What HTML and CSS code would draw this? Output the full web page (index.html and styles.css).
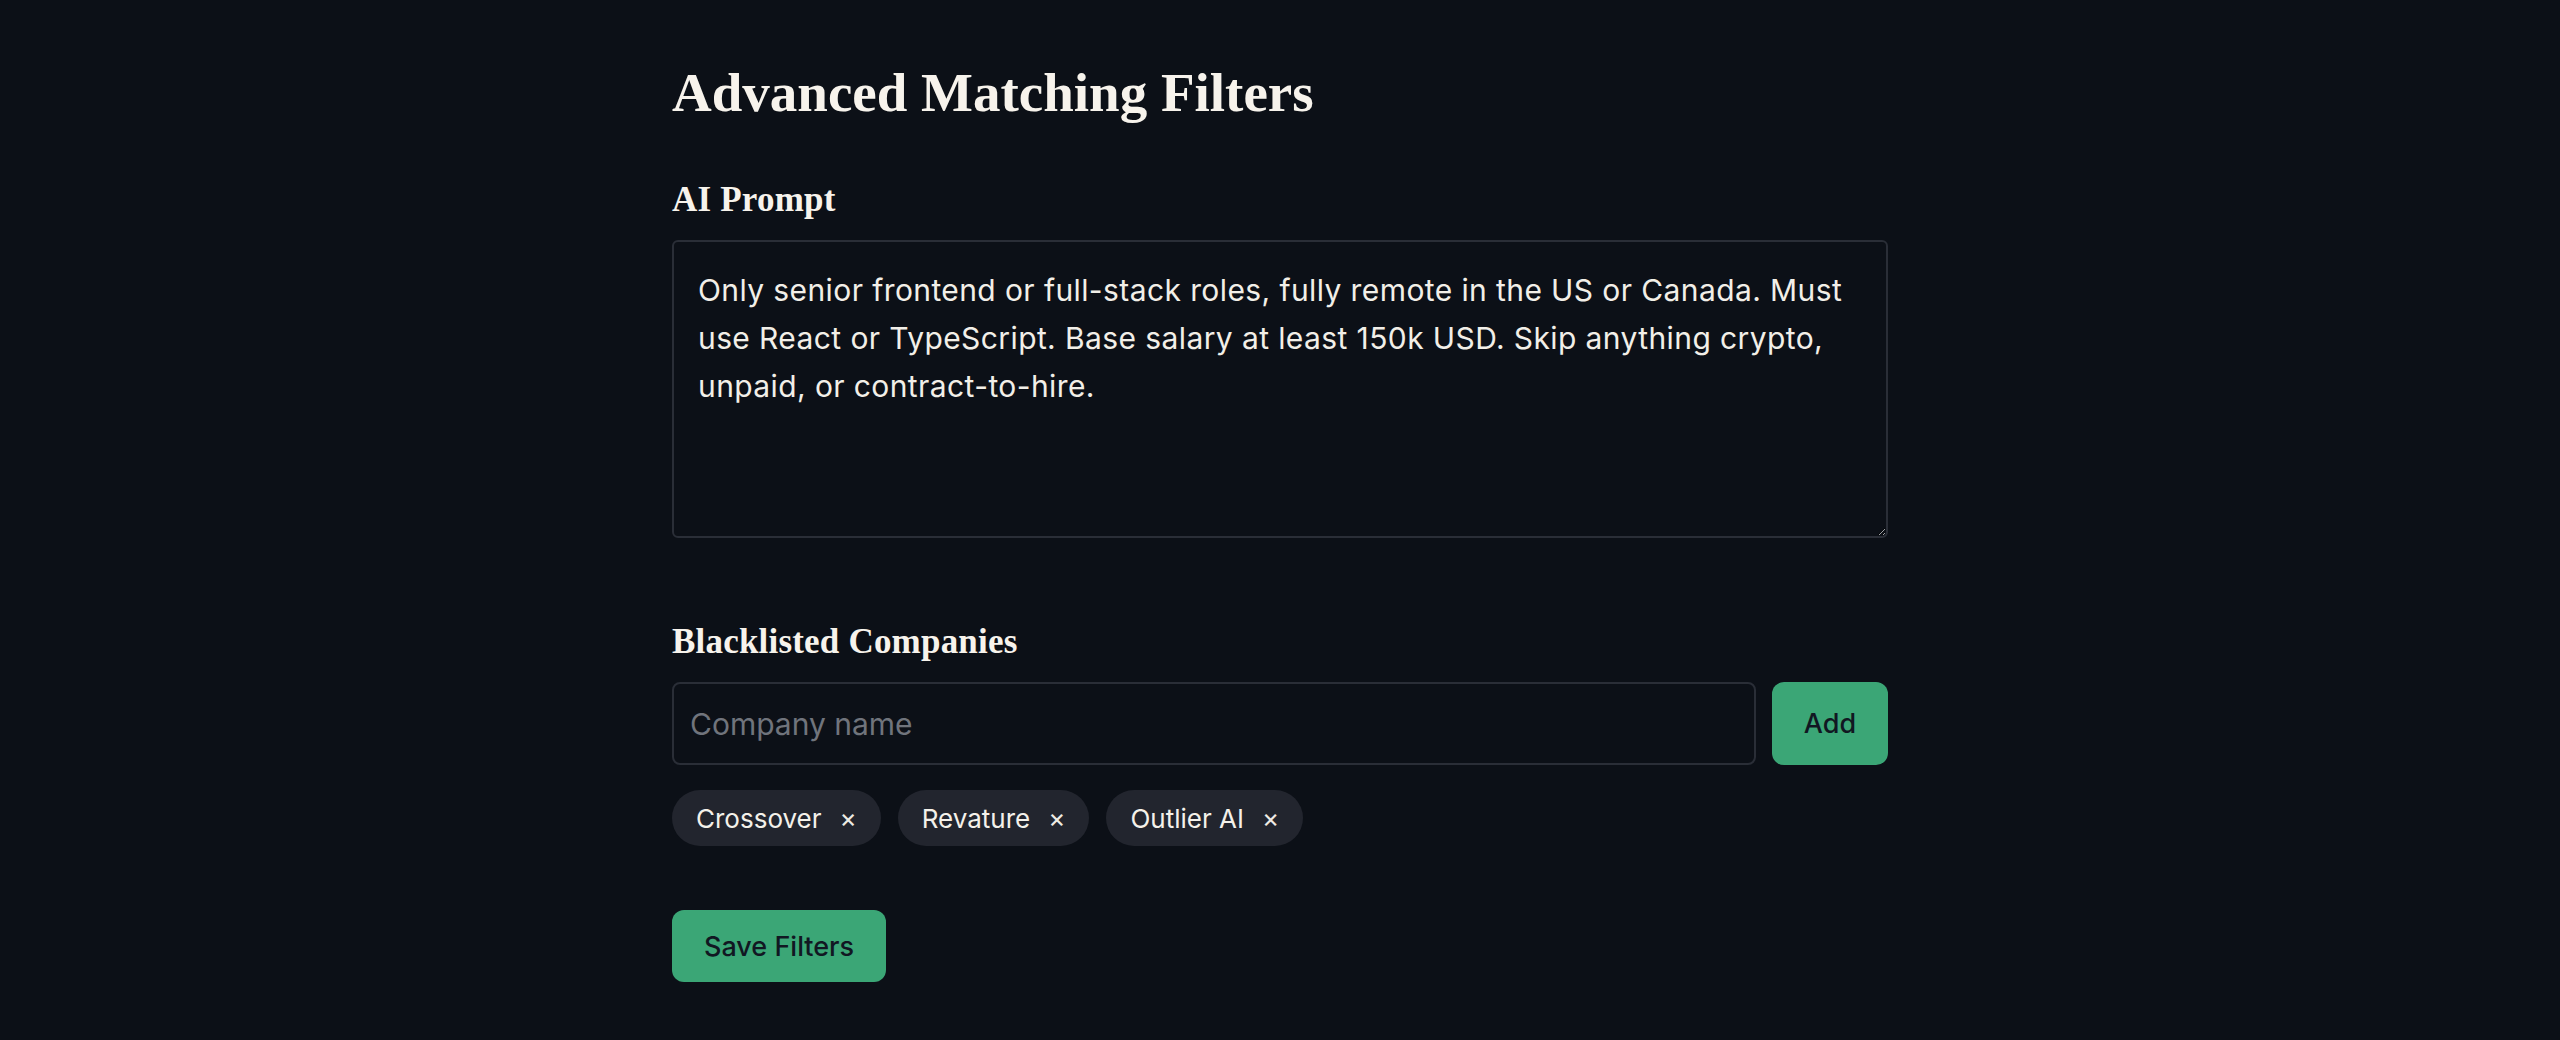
FILE: index.html
```html
<!DOCTYPE html>
<html lang="en">
<head>
<meta charset="utf-8">
<title>Advanced Matching Filters</title>
<link rel="stylesheet" href="styles.css">
</head>
<body>
<main class="page">
  <h1 class="title">Advanced Matching Filters</h1>

  <section class="field field-prompt">
    <label class="label" for="prompt">AI Prompt</label>
    <textarea id="prompt" class="prompt">Only senior frontend or full-stack roles, fully remote in the US or Canada. Must use React or TypeScript. Base salary at least 150k USD. Skip anything crypto, unpaid, or contract-to-hire.</textarea>
  </section>

  <section class="field field-blacklist">
    <label class="label" for="company">Blacklisted Companies</label>
    <div class="add-row">
      <input id="company" class="company-input" type="text" placeholder="Company name">
      <button class="btn btn-add" type="button">Add</button>
    </div>
    <ul class="chips">
      <li class="chip"><span class="chip-text">Crossover</span><button class="chip-x" type="button">×</button></li>
      <li class="chip"><span class="chip-text">Revature</span><button class="chip-x" type="button">×</button></li>
      <li class="chip"><span class="chip-text">Outlier AI</span><button class="chip-x" type="button">×</button></li>
    </ul>
  </section>

  <div class="actions">
    <button class="btn btn-save" type="button">Save Filters</button>
  </div>
</main>
</body>
</html>
```
FILE: styles.css
```css
* { box-sizing: border-box; }

html, body {
  margin: 0;
  background: #0c1017;
  color: #f4f1ea;
  color-scheme: dark;
}

body {
  font-family: Inter, "Noto Sans", sans-serif;
}

.page {
  width: 1216px;
  margin: 0 auto;
  padding-top: 61px;
  display: flex;
  flex-direction: column;
}

.title {
  margin: 0 0 55px;
  font-family: "Liberation Serif", serif;
  font-weight: 700;
  font-size: 55px;
  line-height: 64px;
  color: #f7f3ec;
}

.label {
  display: block;
  margin: 0 0 20px;
  font-family: "Liberation Serif", serif;
  font-weight: 700;
  font-size: 35px;
  line-height: 40px;
  letter-spacing: 0.2px;
  color: #f7f3ec;
}

.field-prompt { margin-bottom: 84px; }

.prompt {
  display: block;
  width: 100%;
  height: 298px;
  margin: 0;
  padding: 24px;
  background: #0c1017;
  color: #f2efe8;
  border: 2px solid #2a2e37;
  border-radius: 6px;
  font-family: Inter, "Noto Sans", sans-serif;
  font-size: 30px;
  line-height: 48px;
  letter-spacing: 0.4px;
  resize: vertical;
  outline: none;
}

.add-row {
  display: flex;
  gap: 16px;
  height: 83px;
}

.company-input {
  flex: 1;
  min-width: 0;
  height: 100%;
  margin: 0;
  padding: 0 16px;
  background: #0c1017;
  color: #f2efe8;
  border: 2px solid #2a2e37;
  border-radius: 8px;
  font-family: Inter, "Noto Sans", sans-serif;
  font-size: 30px;
  outline: none;
}

.company-input::placeholder { color: #70747c; }

.btn {
  border: 0;
  margin: 0;
  background: #3ba676;
  color: #111722;
  font-family: Inter, "Noto Sans", sans-serif;
  font-weight: 500;
  font-size: 27px;
  border-radius: 12px;
  cursor: pointer;
}

.btn-add {
  width: 116px;
  height: 100%;
}

.chips {
  list-style: none;
  margin: 25px 0 0;
  padding: 0;
  display: flex;
  gap: 17px;
}

.chip {
  display: flex;
  align-items: center;
  gap: 18px;
  height: 56px;
  padding: 0 24px;
  background: #22252e;
  border-radius: 28px;
  font-size: 26px;
  color: #f4f1ea;
}

.chip-x {
  border: 0;
  padding: 0;
  margin: 0;
  background: none;
  color: #eeebe4;
  font-family: Inter, "Noto Sans", sans-serif;
  font-size: 26px;
  line-height: 1;
  cursor: pointer;
}

.actions {
  margin-top: 64px;
}

.btn-save {
  height: 72px;
  padding: 0 32px;
}
```
